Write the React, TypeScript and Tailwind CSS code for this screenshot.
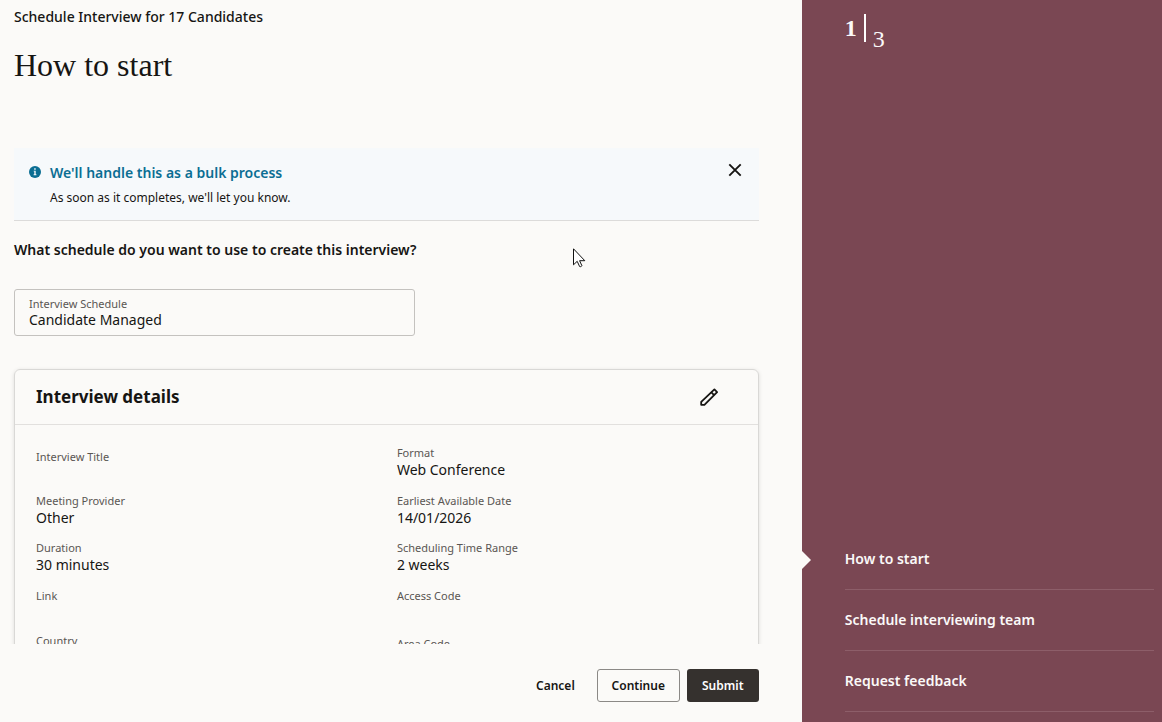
import { useState } from 'react';

interface Field {
  label: string;
  value?: string;
  className?: string;
}

const leftFields: Field[] = [
  { label: 'Interview Title', className: 'h-12 pt-1' },
  { label: 'Meeting Provider', value: 'Other', className: 'h-[47px]' },
  { label: 'Duration', value: '30 minutes', className: 'h-12' },
  { label: 'Link', className: 'h-[45px]' },
  { label: 'Country', className: 'h-12' },
];

const rightFields: Field[] = [
  { label: 'Format', value: 'Web Conference', className: 'h-12' },
  { label: 'Earliest Available Date', value: '14/01/2026', className: 'h-[47px]' },
  { label: 'Scheduling Time Range', value: '2 weeks', className: 'h-12' },
  { label: 'Access Code', className: 'h-12' },
  { label: 'Area Code', className: 'h-12' },
];

const steps = ['How to start', 'Schedule interviewing team', 'Request feedback'];

function FieldColumn({ fields }: { fields: Field[] }) {
  return (
    <dl className="flex-1">
      {fields.map((field) => (
        <div key={field.label} className={field.className}>
          <dt className="text-[11px] leading-4 text-[#5a5653]">{field.label}</dt>
          {field.value && <dd className="text-sm leading-[18px]">{field.value}</dd>}
        </div>
      ))}
    </dl>
  );
}

function InfoIcon() {
  return (
    <svg viewBox="0 0 12 12" className="mt-[18px] h-3 w-3 shrink-0" aria-hidden="true">
      <circle cx="6" cy="6" r="6" fill="#0b6e93" />
      <path d="M5.2 2.3h1.5v1.4H5.2zM4.7 4.7h2v3.6h.7v.9H4.6v-.9h.7V5.6h-.6z" fill="#f6fafc" />
    </svg>
  );
}

function CloseIcon() {
  return (
    <svg viewBox="0 0 14 14" className="h-3.5 w-3.5" fill="none" stroke="currentColor" strokeWidth="1.9">
      <path d="M1.3 1.3l11.4 11.4M12.7 1.3L1.3 12.7" />
    </svg>
  );
}

function PencilIcon() {
  return (
    <svg viewBox="0 0 20 20" className="h-5 w-5" fill="none" stroke="currentColor" strokeWidth="1.8">
      <path d="M15.4 2.4l2.7 2.7L5.4 17.8H2.2v-2.9z" strokeLinejoin="round" />
      <path d="M12.4 5.4l2.7 2.7" />
    </svg>
  );
}

function Cursor() {
  return (
    <svg viewBox="0 0 13 20" className="pointer-events-none absolute top-[248px] left-[573px] h-5 w-[13px]" aria-hidden="true">
      <path
        d="M.5.8v16l3.7-3.5 2.4 5.2c.8.5 2 0 2.3-.8l-2.3-5h5.2z"
        fill="#fff"
        stroke="#111"
        strokeWidth="1"
      />
    </svg>
  );
}

export default function App() {
  const [showBanner, setShowBanner] = useState(true);
  const [current, setCurrent] = useState(0);

  return (
    <div className="relative flex h-screen overflow-hidden bg-[#fbfaf8] font-['Noto_Sans',sans-serif] text-[#161513]">
      <main className="flex min-w-0 flex-1 flex-col">
        <div className="min-h-0 flex-1 overflow-hidden pr-[43px] pl-3.5">
          <header className="flex h-[148px] flex-col pt-[7px]">
            <p className="text-sm leading-5 font-medium">Schedule Interview for 17 Candidates</p>
            <h1 className="mt-[18px] font-['Liberation_Serif',serif] text-[32px] leading-10">How to start</h1>
          </header>

          {showBanner && (
            <section className="flex h-[73px] gap-[9px] border-b border-[#dcdbda] bg-[#f6f9fb] pl-[15px]">
              <InfoIcon />
              <div className="flex-1 pt-[15px]">
                <h2 className="text-sm leading-5 font-semibold text-[#0b6e93]">We'll handle this as a bulk process</h2>
                <p className="mt-[5px] text-xs leading-5">As soon as it completes, we'll let you know.</p>
              </div>
              <button
                type="button"
                aria-label="Close"
                onClick={() => setShowBanner(false)}
                className="flex h-11 w-12 items-center justify-center"
              >
                <CloseIcon />
              </button>
            </section>
          )}

          <h2 className="mt-[19px] text-sm leading-5 font-semibold">
            What schedule do you want to use to create this interview?
          </h2>

          <div className="mt-[29px] h-[47px] w-[401px] rounded-[3px] border border-[#c4c2bf] px-3.5 pt-1.5">
            <label htmlFor="schedule" className="block text-[11px] leading-4 text-[#5a5653]">
              Interview Schedule
            </label>
            <input
              id="schedule"
              readOnly
              defaultValue="Candidate Managed"
              className="-mt-0.5 block h-5 w-full bg-transparent text-sm leading-5 outline-none"
            />
          </div>

          <section className="mt-[33px] rounded-md border border-[#d9d8d6] shadow-[0_1px_4px_rgba(0,0,0,0.12)]">
            <div className="flex h-[55px] items-center justify-between border-b border-[#e2e0de] pr-[39px] pl-[21px]">
              <h2 className="text-[17px] leading-6 font-bold">Interview details</h2>
              <button type="button" aria-label="Edit interview details">
                <PencilIcon />
              </button>
            </div>
            <div className="flex pt-5 pl-[21px]">
              <FieldColumn fields={leftFields} />
              <FieldColumn fields={rightFields} />
            </div>
          </section>
        </div>

        <footer className="flex h-[78px] shrink-0 items-start justify-end gap-[7px] pt-[25px] pr-[43px] text-xs font-semibold">
          <button type="button" className="h-[33px] px-[15px]">
            Cancel
          </button>
          <button type="button" className="h-[33px] w-[83px] rounded-[3px] border border-[#8b8986]">
            Continue
          </button>
          <button type="button" className="h-[33px] w-[72px] rounded-[3px] bg-[#35312e] text-white">
            Submit
          </button>
        </footer>
      </main>

      <aside className="flex w-[31%] shrink-0 flex-col justify-between bg-[#7a4753] text-[#fbf9f8]">
        <div className="flex pt-3.5 pl-[43px] font-['Liberation_Serif',serif] text-2xl leading-7">
          <span className="font-bold">{current + 1}</span>
          <span className="ml-[7px] h-7 w-0.5 bg-white" />
          <span className="ml-[7px] pt-[11px]">{steps.length}</span>
        </div>
        <nav className="mb-2.5">
          {steps.map((step, index) => (
            <div key={step} className="relative pr-2 pl-[43px]">
              {index === current && (
                <svg viewBox="0 0 9 18" className="absolute top-[22px] left-0 h-[18px] w-[9px]" aria-hidden="true">
                  <path d="M0 0l9 9-9 9z" fill="#fbfaf8" />
                </svg>
              )}
              <button
                type="button"
                onClick={() => setCurrent(index)}
                className="block h-[61px] w-full border-b border-[#8d5e69] text-left text-sm font-semibold"
              >
                {step}
              </button>
            </div>
          ))}
        </nav>
      </aside>

      <Cursor />
    </div>
  );
}
